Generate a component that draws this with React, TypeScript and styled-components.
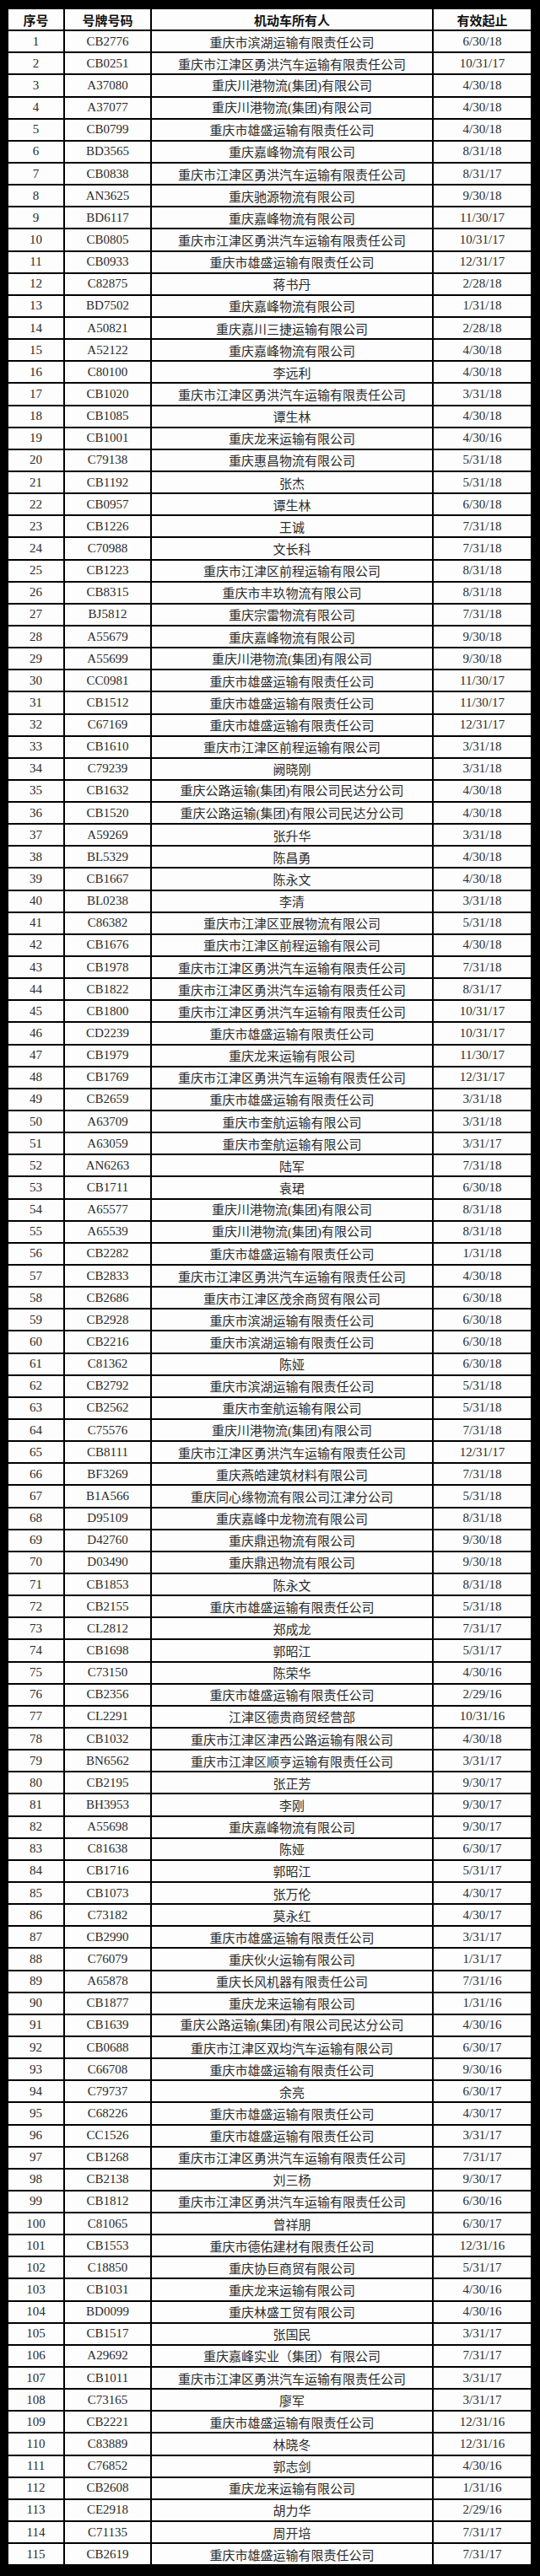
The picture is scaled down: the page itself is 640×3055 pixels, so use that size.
import React from 'react';
import styled, { createGlobalStyle } from 'styled-components';

type Entry = [string, string, string];

// 号牌号码, 机动车所有人, 有效起止
const rows: Entry[] = [
  ['CB2776', '重庆市滨湖运输有限责任公司', '6/30/18'],
  ['CB0251', '重庆市江津区勇洪汽车运输有限责任公司', '10/31/17'],
  ['A37080', '重庆川港物流(集团)有限公司', '4/30/18'],
  ['A37077', '重庆川港物流(集团)有限公司', '4/30/18'],
  ['CB0799', '重庆市雄盛运输有限责任公司', '4/30/18'],
  ['BD3565', '重庆嘉峰物流有限公司', '8/31/18'],
  ['CB0838', '重庆市江津区勇洪汽车运输有限责任公司', '8/31/17'],
  ['AN3625', '重庆驰源物流有限公司', '9/30/18'],
  ['BD6117', '重庆嘉峰物流有限公司', '11/30/17'],
  ['CB0805', '重庆市江津区勇洪汽车运输有限责任公司', '10/31/17'],
  ['CB0933', '重庆市雄盛运输有限责任公司', '12/31/17'],
  ['C82875', '蒋书丹', '2/28/18'],
  ['BD7502', '重庆嘉峰物流有限公司', '1/31/18'],
  ['A50821', '重庆嘉川三捷运输有限公司', '2/28/18'],
  ['A52122', '重庆嘉峰物流有限公司', '4/30/18'],
  ['C80100', '李远利', '4/30/18'],
  ['CB1020', '重庆市江津区勇洪汽车运输有限责任公司', '3/31/18'],
  ['CB1085', '谭生林', '4/30/18'],
  ['CB1001', '重庆龙来运输有限公司', '4/30/16'],
  ['C79138', '重庆惠昌物流有限公司', '5/31/18'],
  ['CB1192', '张杰', '5/31/18'],
  ['CB0957', '谭生林', '6/30/18'],
  ['CB1226', '王诚', '7/31/18'],
  ['C70988', '文长科', '7/31/18'],
  ['CB1223', '重庆市江津区前程运输有限公司', '8/31/18'],
  ['CB8315', '重庆市丰玖物流有限公司', '8/31/18'],
  ['BJ5812', '重庆宗雷物流有限公司', '7/31/18'],
  ['A55679', '重庆嘉峰物流有限公司', '9/30/18'],
  ['A55699', '重庆川港物流(集团)有限公司', '9/30/18'],
  ['CC0981', '重庆市雄盛运输有限责任公司', '11/30/17'],
  ['CB1512', '重庆市雄盛运输有限责任公司', '11/30/17'],
  ['C67169', '重庆市雄盛运输有限责任公司', '12/31/17'],
  ['CB1610', '重庆市江津区前程运输有限公司', '3/31/18'],
  ['C79239', '阙晓刚', '3/31/18'],
  ['CB1632', '重庆公路运输(集团)有限公司民达分公司', '4/30/18'],
  ['CB1520', '重庆公路运输(集团)有限公司民达分公司', '4/30/18'],
  ['A59269', '张升华', '3/31/18'],
  ['BL5329', '陈昌勇', '4/30/18'],
  ['CB1667', '陈永文', '4/30/18'],
  ['BL0238', '李清', '3/31/18'],
  ['C86382', '重庆市江津区亚展物流有限公司', '5/31/18'],
  ['CB1676', '重庆市江津区前程运输有限公司', '4/30/18'],
  ['CB1978', '重庆市江津区勇洪汽车运输有限责任公司', '7/31/18'],
  ['CB1822', '重庆市江津区勇洪汽车运输有限责任公司', '8/31/17'],
  ['CB1800', '重庆市江津区勇洪汽车运输有限责任公司', '10/31/17'],
  ['CD2239', '重庆市雄盛运输有限责任公司', '10/31/17'],
  ['CB1979', '重庆龙来运输有限公司', '11/30/17'],
  ['CB1769', '重庆市江津区勇洪汽车运输有限责任公司', '12/31/17'],
  ['CB2659', '重庆市雄盛运输有限责任公司', '3/31/18'],
  ['A63709', '重庆市奎航运输有限公司', '3/31/18'],
  ['A63059', '重庆市奎航运输有限公司', '3/31/17'],
  ['AN6263', '陆军', '7/31/18'],
  ['CB1711', '袁珺', '6/30/18'],
  ['A65577', '重庆川港物流(集团)有限公司', '8/31/18'],
  ['A65539', '重庆川港物流(集团)有限公司', '8/31/18'],
  ['CB2282', '重庆市雄盛运输有限责任公司', '1/31/18'],
  ['CB2833', '重庆市江津区勇洪汽车运输有限责任公司', '4/30/18'],
  ['CB2686', '重庆市江津区茂余商贸有限公司', '6/30/18'],
  ['CB2928', '重庆市滨湖运输有限责任公司', '6/30/18'],
  ['CB2216', '重庆市滨湖运输有限责任公司', '6/30/18'],
  ['C81362', '陈娅', '6/30/18'],
  ['CB2792', '重庆市滨湖运输有限责任公司', '5/31/18'],
  ['CB2562', '重庆市奎航运输有限公司', '5/31/18'],
  ['C75576', '重庆川港物流(集团)有限公司', '7/31/18'],
  ['CB8111', '重庆市江津区勇洪汽车运输有限责任公司', '12/31/17'],
  ['BF3269', '重庆燕皓建筑材料有限公司', '7/31/18'],
  ['B1A566', '重庆同心缘物流有限公司江津分公司', '5/31/18'],
  ['D95109', '重庆嘉峰中龙物流有限公司', '8/31/18'],
  ['D42760', '重庆鼎迅物流有限公司', '9/30/18'],
  ['D03490', '重庆鼎迅物流有限公司', '9/30/18'],
  ['CB1853', '陈永文', '8/31/18'],
  ['CB2155', '重庆市雄盛运输有限责任公司', '5/31/18'],
  ['CL2812', '郑成龙', '7/31/17'],
  ['CB1698', '郭昭江', '5/31/17'],
  ['C73150', '陈荣华', '4/30/16'],
  ['CB2356', '重庆市雄盛运输有限责任公司', '2/29/16'],
  ['CL2291', '江津区德贵商贸经营部', '10/31/16'],
  ['CB1032', '重庆市江津区津西公路运输有限公司', '4/30/18'],
  ['BN6562', '重庆市江津区顺亨运输有限责任公司', '3/31/17'],
  ['CB2195', '张正芳', '9/30/17'],
  ['BH3953', '李刚', '9/30/17'],
  ['A55698', '重庆嘉峰物流有限公司', '9/30/17'],
  ['C81638', '陈娅', '6/30/17'],
  ['CB1716', '郭昭江', '5/31/17'],
  ['CB1073', '张万伦', '4/30/17'],
  ['C73182', '莫永红', '4/30/17'],
  ['CB2990', '重庆市雄盛运输有限责任公司', '3/31/17'],
  ['C76079', '重庆伙火运输有限公司', '1/31/17'],
  ['A65878', '重庆长风机器有限责任公司', '7/31/16'],
  ['CB1877', '重庆龙来运输有限公司', '1/31/16'],
  ['CB1639', '重庆公路运输(集团)有限公司民达分公司', '4/30/16'],
  ['CB0688', '重庆市江津区双均汽车运输有限公司', '6/30/17'],
  ['C66708', '重庆市雄盛运输有限责任公司', '9/30/16'],
  ['C79737', '余亮', '6/30/17'],
  ['C68226', '重庆市雄盛运输有限责任公司', '4/30/17'],
  ['CC1526', '重庆市雄盛运输有限责任公司', '3/31/17'],
  ['CB1268', '重庆市江津区勇洪汽车运输有限责任公司', '7/31/17'],
  ['CB2138', '刘三杨', '9/30/17'],
  ['CB1812', '重庆市江津区勇洪汽车运输有限责任公司', '6/30/16'],
  ['C81065', '曾祥朋', '6/30/17'],
  ['CB1553', '重庆市德佑建材有限责任公司', '12/31/16'],
  ['C18850', '重庆协巨商贸有限公司', '5/31/17'],
  ['CB1031', '重庆龙来运输有限公司', '4/30/16'],
  ['BD0099', '重庆林盛工贸有限公司', '4/30/16'],
  ['CB1517', '张国民', '3/31/17'],
  ['A29692', '重庆嘉峰实业（集团）有限公司', '7/31/17'],
  ['CB1011', '重庆市江津区勇洪汽车运输有限责任公司', '3/31/17'],
  ['C73165', '廖军', '3/31/17'],
  ['CB2221', '重庆市雄盛运输有限责任公司', '12/31/16'],
  ['C83889', '林晓冬', '12/31/16'],
  ['C76852', '郭志剑', '4/30/16'],
  ['CB2608', '重庆龙来运输有限公司', '1/31/16'],
  ['CE2918', '胡力华', '2/29/16'],
  ['C71135', '周开培', '7/31/17'],
  ['CB2619', '重庆市雄盛运输有限责任公司', '7/31/17'],
];

const GlobalStyle = createGlobalStyle`
  html, body {
    margin: 0;
    padding: 0;
    background: #000;
  }
`;

const Page = styled.div`
  background: #000;
  padding: 11px 11px 12px 10px;
  width: 640px;
  box-sizing: border-box;
`;

const Table = styled.div`
  display: flex;
  flex-direction: column;
  gap: 2px;
`;

const Row = styled.div`
  display: grid;
  grid-template-columns: 65px 101px 332px 115px;
  gap: 2px;
  height: 24.155px;
`;

const Cell = styled.div<{ $head?: boolean }>`
  background: #fdfdfd;
  display: flex;
  align-items: center;
  justify-content: center;
  white-space: nowrap;
  overflow: hidden;
  font-size: 15px;
  line-height: 1;
  font-family: ${(p) =>
    p.$head
      ? '"Noto Sans CJK SC", sans-serif'
      : '"Liberation Serif", "Noto Sans CJK SC", serif'};
  font-weight: ${(p) => (p.$head ? 700 : 400)};
  color: ${(p) => (p.$head ? '#111' : '#2b2b2b')};
`;

const Owner = styled.span`
  font-family: "Noto Sans CJK SC", sans-serif;
  font-size: 15px;
  color: #2b2b2b;

  & > i {
    font-style: normal;
    font-family: "Liberation Serif", serif;
  }
`;

// half-width brackets in the source are set in the serif face
const renderOwner = (name: string) =>
  name.split(/([()])/).map((part, i) =>
    part === '(' || part === ')' ? <i key={i}>{part}</i> : part
  );

export default function App() {
  return (
    <>
      <GlobalStyle />
      <Page>
        <Table>
          <Row>
            <Cell $head>序号</Cell>
            <Cell $head>号牌号码</Cell>
            <Cell $head>机动车所有人</Cell>
            <Cell $head>有效起止</Cell>
          </Row>
          {rows.map(([plate, owner, date], i) => (
            <Row key={plate + i}>
              <Cell>{i + 1}</Cell>
              <Cell>{plate}</Cell>
              <Cell>
                <Owner>{renderOwner(owner)}</Owner>
              </Cell>
              <Cell>{date}</Cell>
            </Row>
          ))}
        </Table>
      </Page>
    </>
  );
}
